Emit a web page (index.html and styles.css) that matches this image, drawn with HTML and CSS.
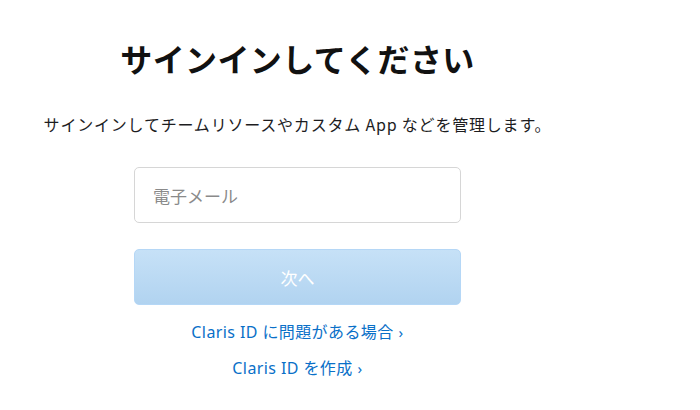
FILE: index.html
```html
<!DOCTYPE html>
<html>
<head>
<meta name="viewport" content="width=device-width, initial-scale=1">
<link rel="stylesheet" href="styles.css">
</head>
<body>
  <div class="signin">
    <h1 class="title">サインインしてください</h1>
    <p class="lead">サインインしてチームリソースやカスタム App などを管理します。</p>

    <input class="field" type="text" placeholder="電子メール">
    <button class="next" type="button" disabled>次へ</button>

    <a class="link first" href="#">Claris ID に問題がある場合<span class="chev">›</span></a>
    <a class="link" href="#">Claris ID を作成<span class="chev">›</span></a>
  </div>
</body>
</html>
```

FILE: styles.css
```css
body{
    margin: 0;
    background: #fff;
    font-family: "Noto Sans", "Noto Sans CJK JP", sans-serif;
}

.signin{
    width: 595px;
    display: flex;
    flex-direction: column;
    align-items: center;
}

.title{
    margin: 38px 0 0;
    font-family: "Noto Sans CJK JP", sans-serif;
    font-size: 32px;
    line-height: 40px;
    font-weight: 700;
    color: #111;
    letter-spacing: 0.4px;
}

.lead{
    margin: 34px 0 0;
    font-family: "Noto Sans CJK JP", sans-serif;
    font-size: 16px;
    line-height: 24px;
    color: #1d1d1f;
    letter-spacing: 0.8px;
}

.field{
    box-sizing: border-box;
    margin-top: 31px;
    width: 327px;
    height: 56px;
    padding: 0 18px;
    border: 1px solid #d6d6d6;
    border-radius: 5px;
    font-family: "Noto Sans CJK JP", sans-serif;
    font-size: 17px;
    color: #333;
    outline: none;
}

.field::placeholder{
    color: #8a8a8a;
}

.next{
    box-sizing: border-box;
    margin-top: 26px;
    width: 327px;
    height: 56px;
    border: 1px solid #b5d7f6;
    border-radius: 5px;
    background: linear-gradient(#c6e1f7, #b1d3f0);
    font-family: "Noto Sans CJK JP", sans-serif;
    font-size: 17px;
    color: #fff;
}

.link{
    margin-top: 12px;
    font-size: 16px;
    line-height: 24px;
    color: #0a70c8;
    text-decoration: none;
    letter-spacing: 0.4px;
}

.link.first{
    margin-top: 15px;
}

.chev{
    margin-left: 5px;
    font-size: 15px;
}
```
